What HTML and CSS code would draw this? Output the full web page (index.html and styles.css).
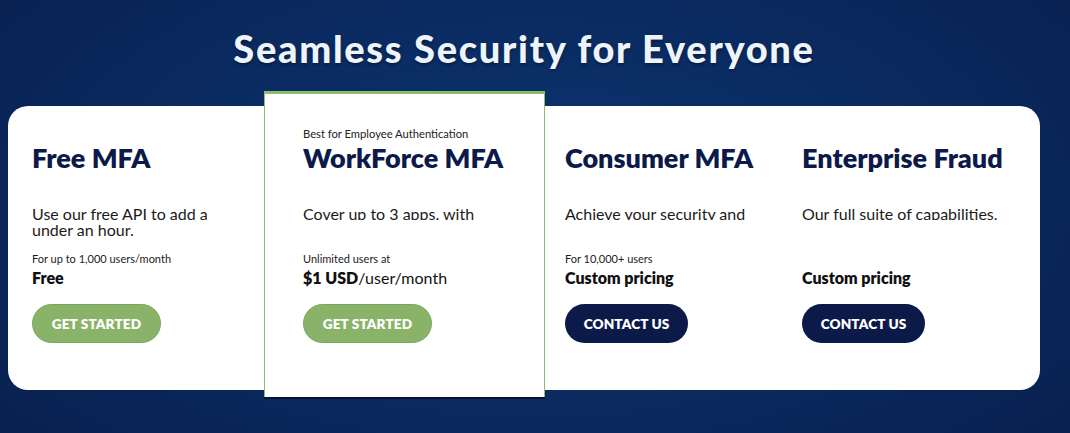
FILE: index.html
```html
<!DOCTYPE html>
<html lang="en">
<head>
<meta charset="utf-8">
<title>Seamless Security for Everyone</title>
<link rel="stylesheet" href="styles.css">
</head>
<body>
<main class="page">
  <h1 class="title">Seamless Security for Everyone</h1>
  <section class="plans">
    <div class="plan plan-free">
      <p class="eyebrow"></p>
      <h2 class="plan-name">Free MFA</h2>
      <div class="desc"><p>Use our free API to add a<br>under an hour.</p></div>
      <p class="note">For up to 1,000 users/month</p>
      <p class="price"><strong>Free</strong></p>
      <a class="btn btn-green" href="#">GET STARTED</a>
    </div>
    <div class="plan plan-featured">
      <p class="eyebrow">Best for Employee Authentication</p>
      <h2 class="plan-name">WorkForce MFA</h2>
      <div class="desc"><p class="clip">Cover up to 3 apps. with</p></div>
      <p class="note">Unlimited users at</p>
      <p class="price"><strong>$1 USD</strong>/user/month</p>
      <a class="btn btn-green" href="#">GET STARTED</a>
    </div>
    <div class="plan plan-consumer">
      <p class="eyebrow"></p>
      <h2 class="plan-name">Consumer MFA</h2>
      <div class="desc"><p class="clip">Achieve your security and</p></div>
      <p class="note">For 10,000+ users</p>
      <p class="price"><strong>Custom pricing</strong></p>
      <a class="btn btn-navy" href="#">CONTACT US</a>
    </div>
    <div class="plan plan-enterprise">
      <p class="eyebrow"></p>
      <h2 class="plan-name">Enterprise Fraud</h2>
      <div class="desc"><p class="clip">Our full suite of capabilities.</p></div>
      <p class="note"></p>
      <p class="price"><strong>Custom pricing</strong></p>
      <a class="btn btn-navy" href="#">CONTACT US</a>
    </div>
  </section>
</main>
</body>
</html>
```
FILE: styles.css
```css
* { box-sizing: border-box; }
html, body { margin: 0; padding: 0; }
body {
  width: 1070px;
  height: 433px;
  overflow: hidden;
  font-family: "Lato", "Noto Sans", sans-serif;
  background: radial-gradient(ellipse 75% 95% at 50% 45%, #0c3470 0%, #0a2a60 50%, #081d4a 100%);
  color: #111;
}
.page {
  padding-top: 26px;
}
.title {
  margin: 0 0 36px;
  padding-right: 22px;
  text-align: center;
  color: #eef4fb;
  font-size: 38px;
  font-weight: 900;
  line-height: 44px;
  letter-spacing: 1.7px;
  text-shadow: 0 2px 3px rgba(0, 0, 0, 0.35);
}
.plans {
  display: flex;
  margin-left: 8px;
  width: 1032px;
  height: 284px;
  background: #fff;
  border-radius: 20px;
}
.plan {
  padding-top: 21px;
}
.plan-free { width: 256px; padding-left: 24px; }
.plan-featured {
  width: 281px;
  margin: -15px 0 -7px;
  padding-top: 33px;
  padding-left: 38px;
  border: 1px solid #8cbc6c;
  border-top: 3px solid #8cbc6c;
  border-bottom: 0;
  background: #fff;
  box-shadow: 0 2px 0 #061331;
}
.plan-consumer { width: 237px; padding-left: 20px; }
.plan-enterprise { width: 258px; padding-left: 20px; }
.eyebrow {
  margin: 0;
  height: 14px;
  font-size: 11.2px;
  line-height: 14px;
  color: #222;
}
.plan-name {
  margin: 1px 0 0;
  font-size: 27px;
  line-height: 32px;
  font-weight: 800;
  color: #0c1a4a;
}
.desc {
  margin-top: 32px;
  height: 46px;
}
.desc p {
  margin: 0;
  font-size: 16px;
  line-height: 16px;
  font-weight: 400;
  color: #1b1b1b;
}
.desc p.clip {
  height: 14px;
  overflow: hidden;
}
.note {
  margin: 0;
  height: 14px;
  font-size: 11px;
  line-height: 14px;
  color: #1b1b1b;
}
.price {
  margin: 2px 0 0;
  font-size: 16px;
  line-height: 20px;
  color: #111;
}
.price strong { font-weight: 800; }
.btn {
  display: inline-flex;
  align-items: center;
  justify-content: center;
  margin-top: 16px;
  height: 39px;
  border-radius: 20px;
  font-size: 13.6px;
  font-weight: 800;
  color: #fff;
  text-decoration: none;
  letter-spacing: 0.1px;
}
.btn-green {
  width: 129px;
  background: #8ab36a;
  border: 1px solid #7aa65c;
}
.btn-navy {
  width: 123px;
  background: #0c1a4a;
}
```
